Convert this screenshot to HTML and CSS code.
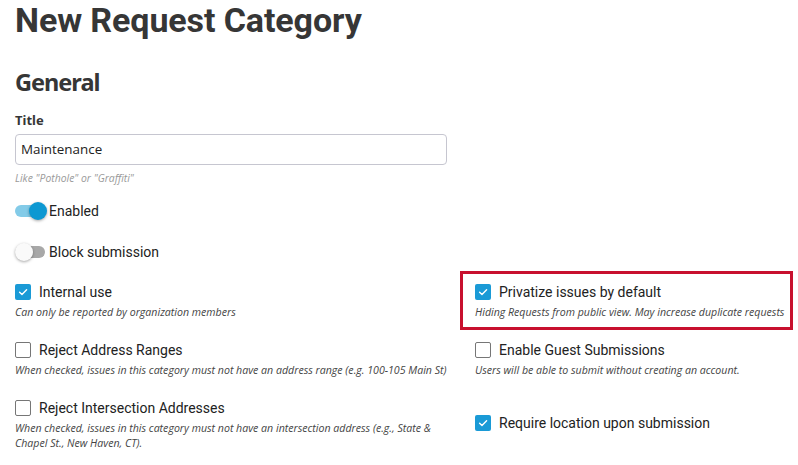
FILE: index.html
```html
<!DOCTYPE html>
<html lang="en">
<head>
<meta charset="utf-8">
<title>New Request Category</title>
<link rel="stylesheet" href="styles.css">
</head>
<body>
<main class="page">
  <h1 class="page-title">New Request Category</h1>
  <h2 class="section-title">General</h2>

  <div class="field">
    <label class="field-label" for="title">Title</label>
    <div class="input" id="title">Maintenance</div>
    <p class="hint">Like "Pothole" or "Graffiti"</p>
  </div>

  <div class="toggle-row first">
    <span class="switch on"><span class="track"></span><span class="thumb"></span></span>
    <span class="toggle-label">Enabled</span>
  </div>
  <div class="toggle-row">
    <span class="switch off"><span class="track"></span><span class="thumb"></span></span>
    <span class="toggle-label">Block submission</span>
  </div>

  <div class="options">
    <div class="option">
      <div class="check-line">
        <span class="box checked"><svg viewBox="0 0 16 16" width="16" height="16"><path d="M4.6 8.2 L7 10.5 L11.6 5.8" fill="none" stroke="#fff" stroke-width="1.4" stroke-linecap="round" stroke-linejoin="round"/></svg></span>
        <span class="check-label">Internal use</span>
      </div>
      <p class="desc">Can only be reported by organization members</p>
    </div>
    <div class="option right highlight">
      <div class="check-line">
        <span class="box checked"><svg viewBox="0 0 16 16" width="16" height="16"><path d="M4.6 8.2 L7 10.5 L11.6 5.8" fill="none" stroke="#fff" stroke-width="1.4" stroke-linecap="round" stroke-linejoin="round"/></svg></span>
        <span class="check-label">Privatize issues by default</span>
      </div>
      <p class="desc nowrap">Hiding Requests from public view. May increase duplicate requests</p>
    </div>

    <div class="option">
      <div class="check-line">
        <span class="box"></span>
        <span class="check-label">Reject Address Ranges</span>
      </div>
      <p class="desc">When checked, issues in this category must not have an address range (e.g. 100-105 Main St)</p>
    </div>
    <div class="option right">
      <div class="check-line">
        <span class="box"></span>
        <span class="check-label">Enable Guest Submissions</span>
      </div>
      <p class="desc">Users will be able to submit without creating an account.</p>
    </div>

    <div class="option">
      <div class="check-line">
        <span class="box"></span>
        <span class="check-label">Reject Intersection Addresses</span>
      </div>
      <p class="desc">When checked, issues in this category must not have an intersection address (e.g., State &amp; Chapel St., New Haven, CT).</p>
    </div>
    <div class="option right last">
      <div class="check-line">
        <span class="box checked"><svg viewBox="0 0 16 16" width="16" height="16"><path d="M4.6 8.2 L7 10.5 L11.6 5.8" fill="none" stroke="#fff" stroke-width="1.4" stroke-linecap="round" stroke-linejoin="round"/></svg></span>
        <span class="check-label">Require location upon submission</span>
      </div>
    </div>
  </div>
</main>
</body>
</html>
```

FILE: styles.css
```css
* { box-sizing: border-box; }

html, body {
  margin: 0;
  padding: 0;
  background: #fff;
}

body {
  font-family: "Open Sans", "Noto Sans", sans-serif;
  color: #333;
}

.page {
  padding: 0 15px;
}

.page-title {
  margin: 0;
  font-family: Roboto, "Noto Sans", sans-serif;
  font-weight: 700;
  font-size: 34px;
  line-height: 40px;
  letter-spacing: -0.1px;
  color: #363636;
}

.section-title {
  margin: 25.5px 0 0;
  font-family: "Noto Sans", "Open Sans", sans-serif;
  font-weight: 700;
  font-size: 23.5px;
  line-height: 32px;
  letter-spacing: -1px;
  color: #363636;
}

.field {
  margin-top: 13px;
}

.field-label {
  display: block;
  font-family: "Noto Sans", sans-serif;
  font-weight: 700;
  font-size: 13px;
  line-height: 18px;
  color: #363636;
}

.input {
  margin-top: 5px;
  width: 432px;
  height: 31px;
  border: 1px solid #c6c6d0;
  border-radius: 4px;
  padding: 0 5px;
  font-family: "Open Sans", "Noto Sans", sans-serif;
  font-size: 13.4px;
  line-height: 29px;
  color: #222;
}

.hint {
  margin: 5px 0 0;
  font-family: "Open Sans", sans-serif;
  font-style: italic;
  font-size: 10.4px;
  line-height: 16px;
  color: #9a9a9a;
}

.toggle-row {
  display: flex;
  align-items: center;
  height: 20px;
  margin-top: 21px;
}

.toggle-row.first {
  margin-top: 15.5px;
}

.switch {
  position: relative;
  width: 34px;
  height: 20px;
  flex: none;
}

.track {
  position: absolute;
  left: 0;
  top: 4px;
  width: 30px;
  height: 12px;
  border-radius: 6px;
}

.thumb {
  position: absolute;
  top: 1px;
  width: 18px;
  height: 18px;
  border-radius: 50%;
  box-shadow: 0 1px 3px rgba(0, 0, 0, 0.35);
}

.switch.on .track { background: #83cbe8; }
.switch.on .thumb { left: 14px; background: #0d98d2; }
.switch.off .track { background: #a8a8a8; }
.switch.off .thumb { left: 0; background: #fafafa; }

.toggle-label {
  font-family: Roboto, sans-serif;
  font-size: 14px;
  color: #222;
}

.options {
  display: grid;
  grid-template-columns: 445px 1fr;
  align-items: center;
  margin-top: 20.5px;
  margin-right: -10px;
  row-gap: 21px;
}

.option.right {
  padding-left: 15px;
}

.option.highlight {
  margin: -12px 0 -10px;
  border: 3px solid #c8102e;
  padding: 9px 2px 7px 12px;
}

.option.last {
  align-self: start;
  margin-top: 15px;
}

.check-line {
  display: flex;
  align-items: center;
  height: 18px;
}

.box {
  width: 16px;
  height: 16px;
  flex: none;
  border: 1px solid #767676;
  border-radius: 2px;
  background: #fff;
}

.box.checked {
  border: none;
  background: #1a9ad6;
}

.box svg { display: block; }

.check-label {
  margin-left: 8px;
  font-family: Roboto, sans-serif;
  font-size: 14px;
  color: #222;
}

.desc {
  margin: 4px 0 0;
  font-family: "Open Sans", sans-serif;
  font-style: italic;
  font-size: 10.6px;
  line-height: 15px;
  color: #444;
}

.desc.nowrap {
  white-space: nowrap;
}
```
